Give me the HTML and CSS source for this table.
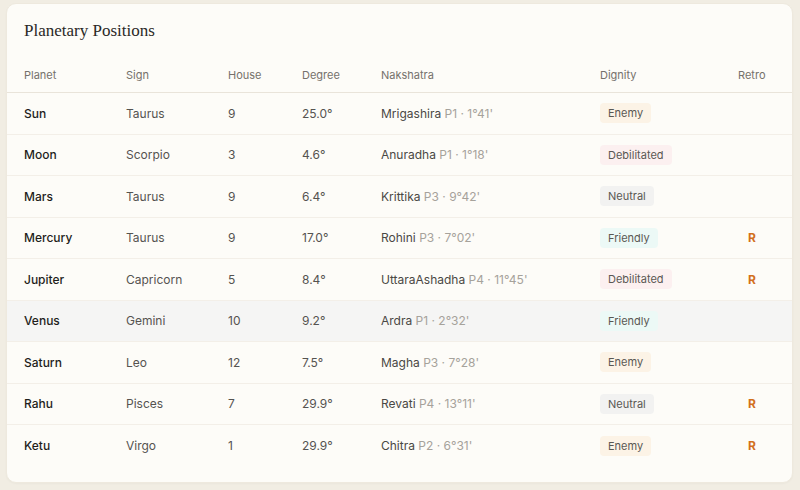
FILE: index.html
```html
<!DOCTYPE html>
<html>
<head>
<meta charset="utf-8">
<link rel="stylesheet" href="styles.css">
</head>
<body>
<div class="card">
  <h2 class="title">Planetary Positions</h2>
  <div class="table">
    <div class="row head">
      <div>Planet</div><div>Sign</div><div>House</div><div>Degree</div><div>Nakshatra</div><div>Dignity</div><div>Retro</div>
    </div>
    <div class="row">
      <div class="planet">Sun</div><div>Taurus</div><div>9</div><div>25.0°</div>
      <div class="nak">Mrigashira <span class="pada">P1 · 1°41'</span></div>
      <div><span class="badge enemy">Enemy</span></div><div></div>
    </div>
    <div class="row">
      <div class="planet">Moon</div><div>Scorpio</div><div>3</div><div>4.6°</div>
      <div class="nak">Anuradha <span class="pada">P1 · 1°18'</span></div>
      <div><span class="badge debil">Debilitated</span></div><div></div>
    </div>
    <div class="row">
      <div class="planet">Mars</div><div>Taurus</div><div>9</div><div>6.4°</div>
      <div class="nak">Krittika <span class="pada">P3 · 9°42'</span></div>
      <div><span class="badge neutral">Neutral</span></div><div></div>
    </div>
    <div class="row">
      <div class="planet">Mercury</div><div>Taurus</div><div>9</div><div>17.0°</div>
      <div class="nak">Rohini <span class="pada">P3 · 7°02'</span></div>
      <div><span class="badge friendly">Friendly</span></div><div class="retro">R</div>
    </div>
    <div class="row">
      <div class="planet">Jupiter</div><div>Capricorn</div><div>5</div><div>8.4°</div>
      <div class="nak">UttaraAshadha <span class="pada">P4 · 11°45'</span></div>
      <div><span class="badge debil">Debilitated</span></div><div class="retro">R</div>
    </div>
    <div class="row hover">
      <div class="planet">Venus</div><div>Gemini</div><div>10</div><div>9.2°</div>
      <div class="nak">Ardra <span class="pada">P1 · 2°32'</span></div>
      <div><span class="badge friendly">Friendly</span></div><div></div>
    </div>
    <div class="row">
      <div class="planet">Saturn</div><div>Leo</div><div>12</div><div>7.5°</div>
      <div class="nak">Magha <span class="pada">P3 · 7°28'</span></div>
      <div><span class="badge enemy">Enemy</span></div><div></div>
    </div>
    <div class="row">
      <div class="planet">Rahu</div><div>Pisces</div><div>7</div><div>29.9°</div>
      <div class="nak">Revati <span class="pada">P4 · 13°11'</span></div>
      <div><span class="badge neutral">Neutral</span></div><div class="retro">R</div>
    </div>
    <div class="row last">
      <div class="planet">Ketu</div><div>Virgo</div><div>1</div><div>29.9°</div>
      <div class="nak">Chitra <span class="pada">P2 · 6°31'</span></div>
      <div><span class="badge enemy">Enemy</span></div><div class="retro">R</div>
    </div>
  </div>
</div>
</body>
</html>
```
FILE: styles.css
```css
html, body {
  margin: 0;
  padding: 0;
  background: #f1ede3;
}
body {
  padding: 3px 7px 5px 6px;
  font-family: Inter, "Noto Sans", sans-serif;
  font-size: 12px;
  color: #555350;
}
.card {
  background: #fdfcf8;
  border: 1px solid #eee9de;
  border-radius: 10px;
  height: 480px;
  box-sizing: border-box;
  overflow: hidden;
  box-shadow: 0 1px 2px rgba(0,0,0,0.03);
}
.title {
  margin: 0;
  padding: 17px 0 0 17px;
  height: 35px;
  font-family: "Liberation Serif", serif;
  font-weight: 400;
  font-size: 17px;
  color: #2a2826;
  line-height: 20px;
}
.row {
  display: grid;
  grid-template-columns: 102px 102px 74px 79px 219px 138px 1fr;
  align-items: center;
  height: 41.5px;
  box-sizing: border-box;
  border-bottom: 1px solid #f3efe8;
}
.row > div {
  padding-left: 17px;
}
.row.head {
  height: 37px;
  font-size: 11px;
  color: #75716b;
  border-bottom: 1px solid #e9e4da;
  padding-top: 2px;
}
.row.hover {
  background: #f5f5f4;
}
.row.last {
  border-bottom: none;
}
.planet {
  font-weight: 500;
  color: #1f1e1b;
}
.nak {
  color: #4a4844;
}
.pada {
  color: #a6a29b;
}
.badge {
  display: inline-block;
  padding: 3px 8px;
  border-radius: 4px;
  font-size: 11px;
  line-height: 14px;
  color: #5a5853;
}
.enemy { background: #fcf3e6; }
.debil { background: #fcf0f0; }
.neutral { background: #f2f2f1; }
.friendly { background: #ecf9f6; }
.retro {
  color: #d2701c;
  font-weight: 700;
  padding-left: 27px !important;
}
```
